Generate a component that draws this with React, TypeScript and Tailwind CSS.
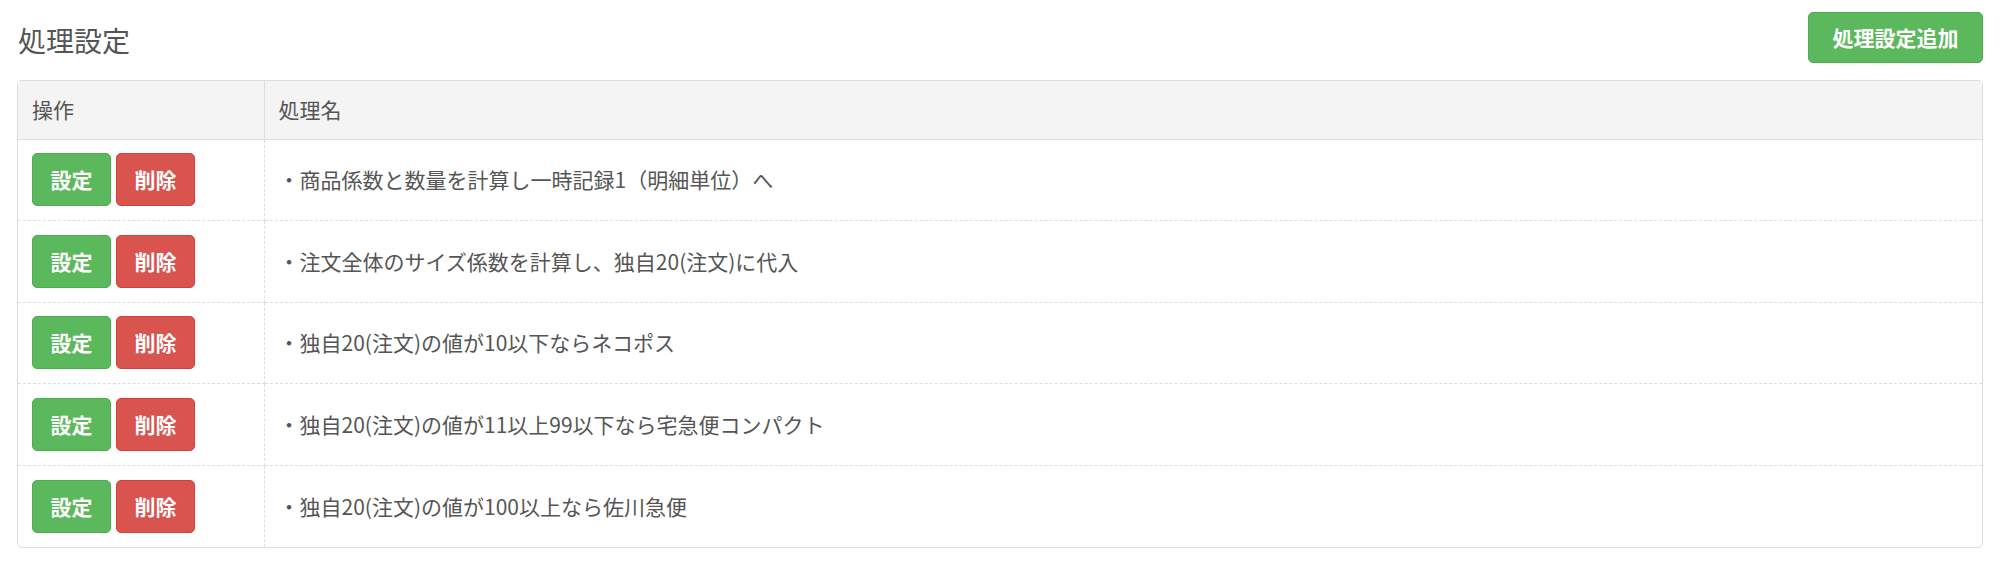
import React from "react";

const rows = [
  "・商品係数と数量を計算し一時記録1（明細単位）へ",
  "・注文全体のサイズ係数を計算し、独自20(注文)に代入",
  "・独自20(注文)の値が10以下ならネコポス",
  "・独自20(注文)の値が11以上99以下なら宅急便コンパクト",
  "・独自20(注文)の値が100以上なら佐川急便",
];

export default function App() {
  return (
    <div
      className="w-[2002px] h-[565px] bg-white pl-[17px] pr-[19px] pt-[12px] text-[#555]"
      style={{ fontFamily: '"Noto Sans CJK JP", "Noto Sans", sans-serif' }}
    >
      <div className="flex justify-between items-start h-[51px] mb-[17px]">
        <h1 className="mt-[14px] ml-[1px] text-[28px] leading-[28px] font-normal text-[#555]">
          処理設定
        </h1>
        <button className="h-[51px] w-[175px] rounded-[5px] bg-[#5cb85c] border border-[#4cae4c] text-white text-[21px] font-bold leading-none">
          処理設定追加
        </button>
      </div>
      <div className="border border-[#ddd] rounded-[5px] overflow-hidden">
        <table className="w-full border-collapse">
          <thead>
            <tr className="bg-[#f4f4f4]">
              <th className="w-[246px] h-[58px] border-r border-[#ddd] border-b text-left font-normal text-[21px] px-[14px] align-middle">
                操作
              </th>
              <th className="h-[58px] border-b border-[#ddd] text-left font-normal text-[21px] px-[14px] align-middle">
                処理名
              </th>
            </tr>
          </thead>
          <tbody>
            {rows.map((r, i) => (
              <tr key={i}>
                <td
                  className={`h-[81.6px] w-[246px] border-r border-dashed border-[#ddd] px-[14px] align-middle ${
                    i < rows.length - 1 ? "border-b" : ""
                  }`}
                >
                  <div className="flex gap-[5px]">
                    <button className="h-[53px] w-[79px] rounded-[5px] bg-[#5cb85c] border border-[#4cae4c] text-white text-[21px] font-bold leading-none">
                      設定
                    </button>
                    <button className="h-[53px] w-[79px] rounded-[5px] bg-[#d9534f] border border-[#d43f3a] text-white text-[21px] font-bold leading-none">
                      削除
                    </button>
                  </div>
                </td>
                <td
                  className={`h-[81.6px] border-dashed border-[#ddd] px-[14px] align-middle text-[21px] ${
                    i < rows.length - 1 ? "border-b" : ""
                  }`}
                >
                  {r}
                </td>
              </tr>
            ))}
          </tbody>
        </table>
      </div>
    </div>
  );
}
